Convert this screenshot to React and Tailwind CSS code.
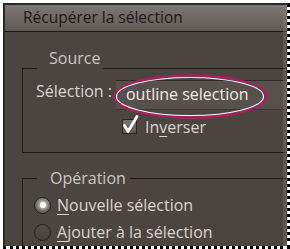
import React from "react";

function Radio({ checked }) {
  if (checked) {
    return (
      <div className="w-[17px] h-[17px] rounded-full border-[1.5px] border-[#231f1d] bg-linear-to-b from-[#7a7471] to-[#5e5855] flex items-center justify-center shrink-0">
        <div className="w-[6px] h-[6px] rounded-full bg-white shadow-[0_0_3px_2px_rgba(255,255,255,0.55)]" />
      </div>
    );
  }
  return (
    <div className="w-[17px] h-[17px] rounded-full border-[1.5px] border-[#231f1d] bg-linear-to-b from-[#524c49] to-[#48423f] shrink-0" />
  );
}

export default function App() {
  return (
    <div className="relative w-[290px] h-[249px] bg-white pl-[3px] pt-[3px] overflow-hidden font-['Open_Sans',sans-serif] text-[16px]">
      <div className="relative h-full flex flex-col overflow-hidden bg-[#4b4542] bg-clip-padding border-l-2 border-t-2 border-r-[3px] border-b-[3px] [border-style:solid_dotted_dotted_solid] border-l-[#2b2726] border-t-[#2b2726] border-r-black border-b-black">
        {/* Title bar */}
        <div className="h-[27px] shrink-0 border-b border-[#1a1716] bg-linear-to-b from-[#7e7875] to-[#605a57] pl-[18px] pt-[2px] leading-[20px] text-[15.5px] text-[#1c1918]">
          Récupérer la sélection
        </div>

        {/* Body */}
        <div className="flex-1 flex flex-col">
          {/* Source group */}
          <div className="ml-[17px] mt-[16px] flex flex-col">
            <div className="flex items-start">
              <div className="w-[15px] mt-[20px] self-stretch border-t border-l border-[#1b1817]" />
              <span className="pl-[12px] pr-[3px] leading-[20px] text-[#cbc6c2]">Source</span>
              <div className="flex-1 mt-[20px] border-t border-[#1b1817]" />
            </div>
            <div className="h-[84px] border-l border-b border-[#1b1817] pt-[11px]">
              <div className="flex items-start pl-[13px] gap-[4px]">
                <span className="mt-[1px] leading-[20px] text-[#d8d4d0] whitespace-nowrap">Sélection :</span>
                <div className="flex-1 h-[30px] pl-[10px] pt-[3px] bg-[#57514e] border-t border-b border-t-[#2e2a28] border-b-[#3b3634] leading-[20px] text-[#efebe7] whitespace-nowrap">
                  outline selection
                </div>
              </div>
              <div className="flex items-start pl-[99px] mt-[9px]">
                <div className="relative w-[15px] h-[15px] shrink-0 border border-[#2a2624] bg-linear-to-b from-[#7a7471] to-[#5d5855]">
                  <svg className="absolute left-[-1px] top-[-1px] overflow-visible" width="15" height="15" viewBox="0 0 15 15">
                    <path d="M2.5 6.5 L6 12.5 L15 -2.5" fill="none" stroke="#ffffff" strokeWidth="2.8" strokeLinecap="round" strokeLinejoin="round" />
                  </svg>
                </div>
                <span className="ml-[8px] -mt-[2px] leading-[20px] text-[#d8d4d0]">
                  In<span className="underline underline-offset-[3px]">v</span>erser
                </span>
              </div>
            </div>
          </div>

          {/* Opération group */}
          <div className="ml-[17px] mt-[15px] flex-1 flex flex-col">
            <div className="flex items-start">
              <div className="w-[15px] mt-[10px] self-stretch border-t border-l border-[#1b1817]" />
              <span className="pl-[13px] pr-[4px] leading-[20px] text-[#cbc6c2]">Opération</span>
              <div className="flex-1 mt-[10px] border-t border-[#1b1817]" />
            </div>
            <div className="flex-1 border-l border-[#1b1817] pt-[7px] pl-[11px]">
              <div className="flex items-center h-[20px]">
                <Radio checked />
                <span className="ml-[6px] leading-[20px] text-[#d8d4d0] whitespace-nowrap">
                  <span className="underline underline-offset-[3px]">N</span>ouvelle sélection
                </span>
              </div>
              <div className="flex items-center h-[20px] mt-[7px]">
                <Radio />
                <span className="ml-[6px] leading-[20px] text-[#d8d4d0] whitespace-nowrap">
                  <span className="underline underline-offset-[3px]">A</span>jouter à la sélection
                </span>
              </div>
            </div>
          </div>
        </div>

        {/* grainy right edge */}
        <div className="absolute top-0 bottom-0 right-0 w-[4px] bg-[#8a8582]/30" />
      </div>

      {/* highlight ellipse */}
      <svg className="absolute left-0 top-0 pointer-events-none" width="290" height="249" viewBox="0 0 290 249">
        <ellipse cx="190" cy="96.5" rx="75.5" ry="21" fill="none" stroke="#a4215c" strokeWidth="3" />
        <ellipse cx="190" cy="96.5" rx="73.5" ry="19" fill="none" stroke="#ffffff" strokeWidth="1.1" />
      </svg>
    </div>
  );
}
